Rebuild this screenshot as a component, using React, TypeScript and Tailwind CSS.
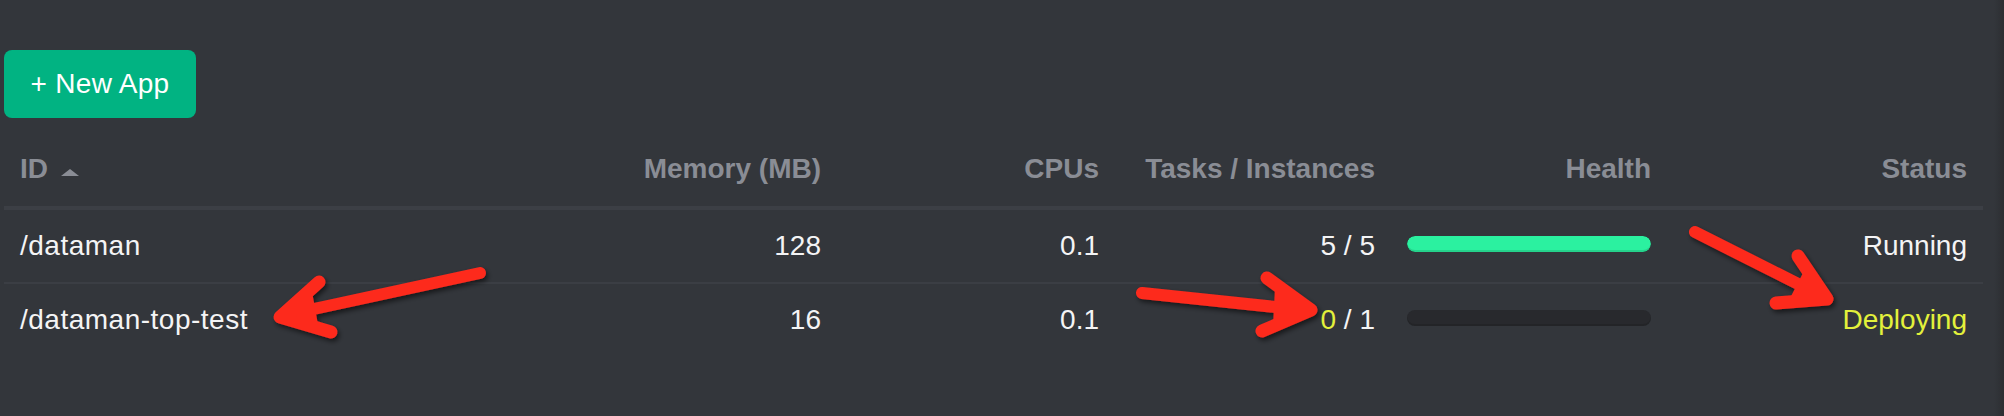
import React from "react";

type Row = {
  id: string;
  mem: string;
  cpus: string;
  tasksRun: string;
  tasksTotal: string;
  running: boolean;
  health: number;
  status: string;
};

const rows: Row[] = [
  { id: "/dataman", mem: "128", cpus: "0.1", tasksRun: "5", tasksTotal: "5", running: true, health: 100, status: "Running" },
  { id: "/dataman-top-test", mem: "16", cpus: "0.1", tasksRun: "0", tasksTotal: "1", running: false, health: 0, status: "Deploying" },
];

const cols = "grid grid-cols-[557px_276px_278px_276px_276px_316px] w-[1979px]";

function Arrows() {
  return (
    <svg
      className="absolute left-0 top-0 pointer-events-none"
      width={2004}
      height={416}
      viewBox="0 0 2004 416"
    >
      <defs>
        <filter id="sh" x="-20%" y="-50%" width="140%" height="200%">
          <feDropShadow dx="2" dy="3" stdDeviation="2.5" floodColor="#000" floodOpacity="0.55" />
        </filter>
      </defs>
      <g
        filter="url(#sh)"
        stroke="#fd2a1e"
        fill="#fd2a1e"
        strokeWidth={12}
        strokeLinecap="round"
        strokeLinejoin="round"
      >
        {/* arrow 1 */}
        <path d="M480 273 L286 315" fill="none" />
        <path d="M319 282 L280 317 L331 332" fill="none" strokeWidth={13} />
        <polygon points="280,317 308,292 314,325" strokeWidth={8} />
        {/* arrow 2 */}
        <path d="M1142 293 L1304 310" fill="none" />
        <path d="M1267 278 L1311 310 L1262 331" fill="none" strokeWidth={13} />
        <polygon points="1311,310 1279,288 1277,326" strokeWidth={8} />
        {/* arrow 3 */}
        <path d="M1695 232 L1820 295" fill="none" />
        <path d="M1798 256 L1827 299 L1776 303" fill="none" strokeWidth={13} />
        <polygon points="1827,299 1809,270 1793,301" strokeWidth={8} />
      </g>
    </svg>
  );
}

export default function App() {
  return (
    <div
      className="relative flex h-[416px] w-[2004px] overflow-hidden bg-[#33363b]"
      style={{ fontFamily: '"Liberation Sans", Arial, Helvetica, sans-serif' }}
    >
      <div className="flex-1 pl-[4px] pt-[50px]">
        <button className="flex h-[68px] w-[192px] items-center justify-center rounded-[8px] bg-[#01b382] text-[28px] leading-none tracking-[0.3px] text-white">
          + New App
        </button>

        <div className={`${cols} border-b-[4px] border-[#3c3f45] text-[28px] font-bold leading-[40px] text-[#8a8d95]`}>
          <div className="flex items-center px-4 pt-[31px] pb-[17px]">
            <span>ID</span>
            <span className="ml-[13px] mt-[7px] h-0 w-0 border-x-[9px] border-b-[7px] border-x-transparent border-b-[#8a8d95]" />
          </div>
          <div className="px-4 pt-[31px] pb-[17px] text-right">Memory (MB)</div>
          <div className="px-4 pt-[31px] pb-[17px] text-right">CPUs</div>
          <div className="px-4 pt-[31px] pb-[17px] text-right">Tasks / Instances</div>
          <div className="px-4 pt-[31px] pb-[17px] text-right">Health</div>
          <div className="px-4 pt-[31px] pb-[17px] text-right">Status</div>
        </div>

        {rows.map((r, i) => (
          <div
            key={r.id}
            className={`${cols} text-[28px] leading-[40px] text-[#f4f4f5] ${i === 0 ? "border-b-[2px] border-[#3b3e44]" : ""}`}
          >
            <div className="px-4 py-4 tracking-[0.5px]">{r.id}</div>
            <div className="px-4 py-4 text-right">{r.mem}</div>
            <div className="px-4 py-4 text-right">{r.cpus}</div>
            <div className="px-4 py-4 text-right">
              <span className={r.running ? "" : "text-[#e3f13b]"}>{r.tasksRun}</span>
              {" / "}
              {r.tasksTotal}
            </div>
            <div className="flex items-center px-4 py-4">
              <div className="mb-[4px] h-[16px] w-full overflow-hidden rounded-full bg-[#28292d] shadow-[inset_0_-2px_0_rgba(0,0,0,0.12)]">
                <div
                  className="h-full rounded-full bg-[#2bf1a0] shadow-[inset_0_-2px_0_rgba(0,0,0,0.12)]"
                  style={{ width: `${r.health}%` }}
                />
              </div>
            </div>
            <div className={`px-4 py-4 text-right ${r.running ? "" : "text-[#e3f13b]"}`}>{r.status}</div>
          </div>
        ))}
      </div>
      <div className="w-[10px] bg-gradient-to-r from-[#33363b] to-[#2c2e32]" />
      <Arrows />
    </div>
  );
}
